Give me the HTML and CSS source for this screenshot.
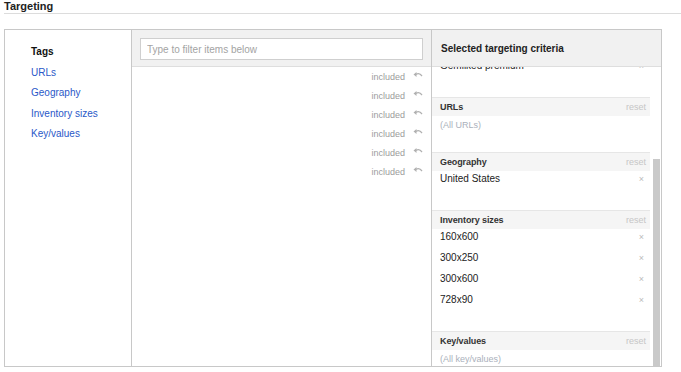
FILE: index.html
```html
<!DOCTYPE html>
<html>
<head>
<meta charset="utf-8">
<link rel="stylesheet" href="styles.css">
</head>
<body>
<div class="page">
  <h1 class="title">Targeting</h1>
  <div class="box">
    <nav class="nav">
      <div class="nav-item active">Tags</div>
      <a class="nav-item">URLs</a>
      <a class="nav-item">Geography</a>
      <a class="nav-item">Inventory sizes</a>
      <a class="nav-item">Key/values</a>
    </nav>
    <div class="picker">
      <div class="picker-head">
        <input class="filter" type="text" placeholder="Type to filter items below">
      </div>
      <div class="picker-list">
        <div class="inc-row"><span>included</span><svg class="undo" width="10" height="7" viewBox="0 0 10 7"><path d="M0.5 3.5 L3.5 1 L3.5 6 Z" fill="#b0b0b0"/><path d="M3 3.3 Q6.5 1.5 9 5" fill="none" stroke="#b0b0b0" stroke-width="1.3"/></svg></div>
        <div class="inc-row"><span>included</span><svg class="undo" width="10" height="7" viewBox="0 0 10 7"><path d="M0.5 3.5 L3.5 1 L3.5 6 Z" fill="#b0b0b0"/><path d="M3 3.3 Q6.5 1.5 9 5" fill="none" stroke="#b0b0b0" stroke-width="1.3"/></svg></div>
        <div class="inc-row"><span>included</span><svg class="undo" width="10" height="7" viewBox="0 0 10 7"><path d="M0.5 3.5 L3.5 1 L3.5 6 Z" fill="#b0b0b0"/><path d="M3 3.3 Q6.5 1.5 9 5" fill="none" stroke="#b0b0b0" stroke-width="1.3"/></svg></div>
        <div class="inc-row"><span>included</span><svg class="undo" width="10" height="7" viewBox="0 0 10 7"><path d="M0.5 3.5 L3.5 1 L3.5 6 Z" fill="#b0b0b0"/><path d="M3 3.3 Q6.5 1.5 9 5" fill="none" stroke="#b0b0b0" stroke-width="1.3"/></svg></div>
        <div class="inc-row"><span>included</span><svg class="undo" width="10" height="7" viewBox="0 0 10 7"><path d="M0.5 3.5 L3.5 1 L3.5 6 Z" fill="#b0b0b0"/><path d="M3 3.3 Q6.5 1.5 9 5" fill="none" stroke="#b0b0b0" stroke-width="1.3"/></svg></div>
        <div class="inc-row"><span>included</span><svg class="undo" width="10" height="7" viewBox="0 0 10 7"><path d="M0.5 3.5 L3.5 1 L3.5 6 Z" fill="#b0b0b0"/><path d="M3 3.3 Q6.5 1.5 9 5" fill="none" stroke="#b0b0b0" stroke-width="1.3"/></svg></div>
      </div>
    </div>
    <div class="selected">
      <div class="sel-head">Selected targeting criteria</div>
      <div class="sel-body">
        <div class="sel-scroll">
          <div class="sel-content">
            <section class="sec sec-first">
              <div class="item"><span>Gemiiked premium</span><span class="x">×</span></div>
            </section>
            <section class="sec">
              <div class="sec-head"><span class="sec-name">URLs</span><span class="reset">reset</span></div>
              <div class="empty">(All URLs)</div>
            </section>
            <section class="sec">
              <div class="sec-head"><span class="sec-name">Geography</span><span class="reset">reset</span></div>
              <div class="item"><span>United States</span><span class="x">×</span></div>
            </section>
            <section class="sec">
              <div class="sec-head"><span class="sec-name">Inventory sizes</span><span class="reset">reset</span></div>
              <div class="item"><span>160x600</span><span class="x">×</span></div>
              <div class="item"><span>300x250</span><span class="x">×</span></div>
              <div class="item"><span>300x600</span><span class="x">×</span></div>
              <div class="item"><span>728x90</span><span class="x">×</span></div>
            </section>
            <section class="sec">
              <div class="sec-head"><span class="sec-name">Key/values</span><span class="reset">reset</span></div>
              <div class="empty">(All key/values)</div>
            </section>
          </div>
        </div>
        <div class="scrollbar"><div class="thumb"></div></div>
      </div>
    </div>
  </div>
</div>
</body>
</html>
```
FILE: styles.css
```css
* { box-sizing: border-box; }
html, body { margin: 0; padding: 0; background: #fff; }
body {
  font-family: "Liberation Sans", Arial, sans-serif;
  font-size: 10px;
  color: #222;
  width: 681px;
  height: 372px;
  overflow: hidden;
}
.page { padding-left: 4px; }
.title {
  margin: 0 0 15px 0;
  font-size: 11px;
  font-weight: bold;
  line-height: 13px;
  height: 14px;
  color: #222;
  border-bottom: 1px solid #dcdcdc;
}
.box {
  width: 658px;
  height: 338px;
  border: 1px solid #c8c8c8;
  display: flex;
}
.nav {
  width: 127px;
  flex: none;
  border-right: 1px solid #c8c8c8;
  padding: 12px 0 0 26px;
  display: flex;
  flex-direction: column;
}
.nav-item {
  line-height: 20.5px;
  color: #2a58c8;
  text-decoration: none;
}
.nav-item.active { color: #111; font-weight: bold; }
.picker {
  width: 300px;
  flex: none;
  border-right: 1px solid #c8c8c8;
  display: flex;
  flex-direction: column;
}
.picker-head {
  height: 37px;
  background: #f1f1f1;
  border-bottom: 1px solid #dedede;
  padding: 8px 8px 0 8px;
}
.filter {
  display: block;
  width: 283px;
  height: 22px;
  margin: 0;
  border: 1px solid #cfcfcf;
  background: #fff;
  padding: 0 6px;
  font-family: "Liberation Sans", Arial, sans-serif;
  font-size: 10px;
  outline: none;
}
.filter::placeholder { color: #a3a3a3; }
.inc-row {
  height: 19px;
  display: flex;
  align-items: center;
  justify-content: flex-end;
  gap: 8px;
  padding-right: 8px;
  color: #9c9c9c;
  font-size: 9px;
}
.undo { margin-top: -4px; }
.selected {
  flex: 1;
  display: flex;
  flex-direction: column;
  min-width: 0;
}
.sel-head {
  height: 37px;
  flex: none;
  background: #f1f1f1;
  border-bottom: 1px solid #dedede;
  padding-left: 9px;
  display: flex;
  align-items: center;
  font-weight: bold;
  color: #222;
}
.sel-body {
  flex: 1;
  display: flex;
  min-height: 0;
}
.sel-scroll {
  width: 218px;
  flex: none;
  overflow: hidden;
}
.sel-content { margin-top: -9px; }
.sec {
  border-top: 1px solid #e6e6e6;
  padding-bottom: 18px;
}
.sec-first { border-top: 0; }
.sec-head {
  height: 18px;
  background: #f5f5f5;
  display: flex;
  align-items: center;
  justify-content: space-between;
  padding: 0 4px 0 8px;
  font-size: 9px;
}
.sec-name { font-weight: bold; color: #333; letter-spacing: -0.1px; }
.reset { color: #c6c6c6; }
.item {
  height: 21px;
  line-height: 16px;
  display: flex;
  justify-content: space-between;
  padding: 0 6px 0 8px;
  color: #222;
}
.x { color: #bbb; font-size: 9px; }
.empty {
  height: 18px;
  line-height: 18px;
  padding-left: 8px;
  color: #aab0bb;
  font-size: 9px;
}
.scrollbar {
  width: 11px;
  flex: none;
  padding: 92px 1px 0 3px;
}
.thumb {
  height: 100%;
  background: #c9c9c9;
}
```
